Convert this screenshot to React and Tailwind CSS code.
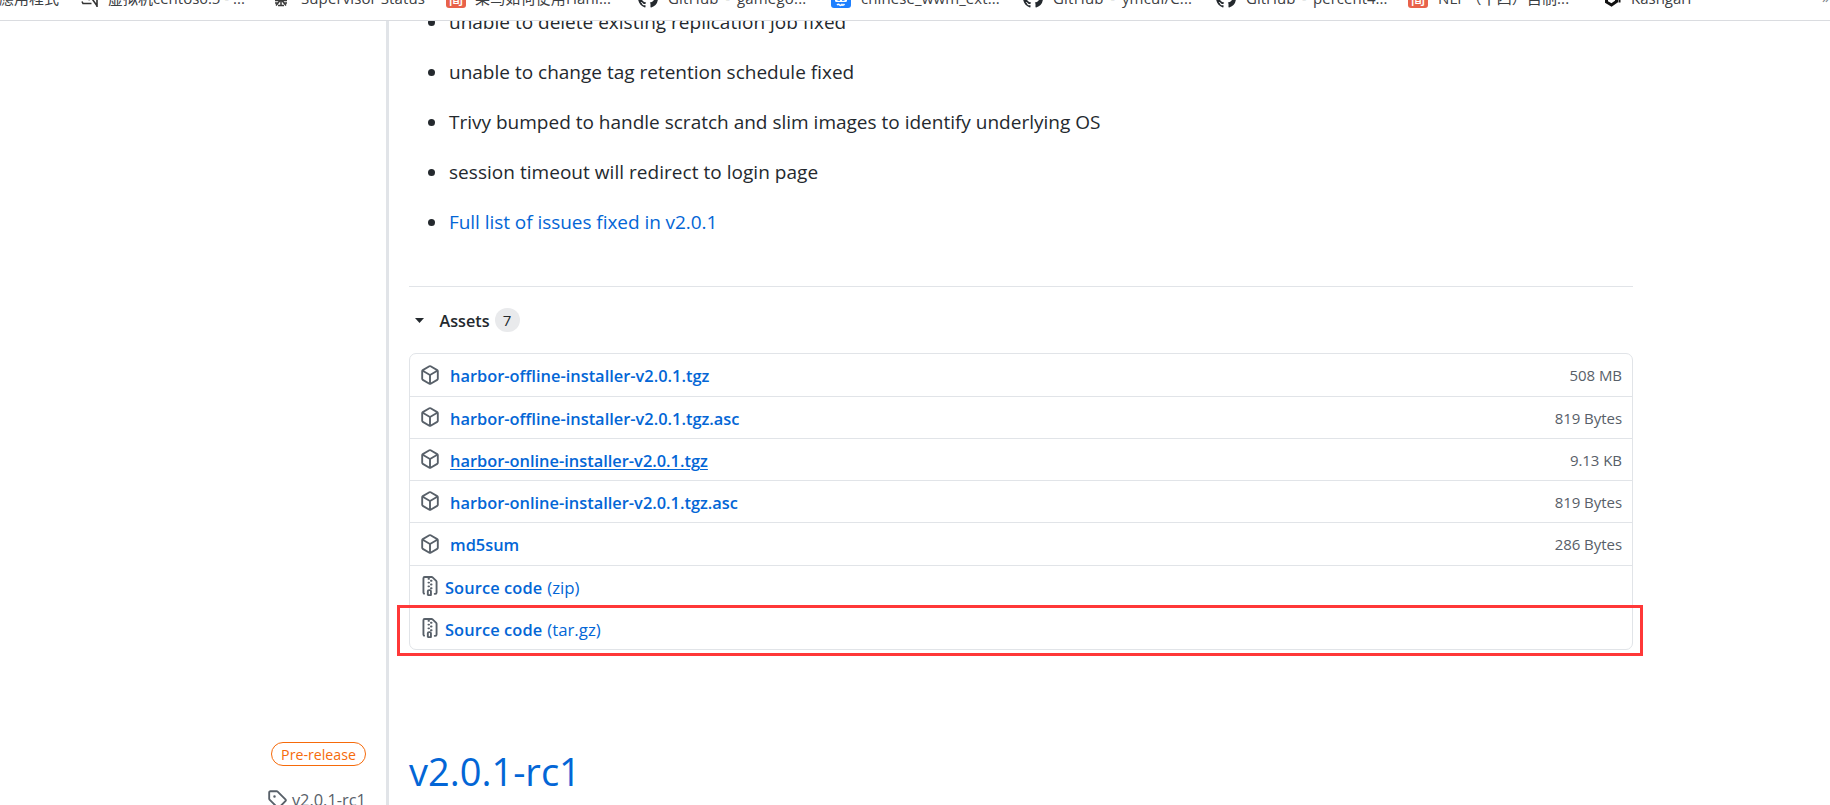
const bookmarks = [
  { icon: "vm", label: "虚拟机centos6.5 - ...", width: "w-[192px]" },
  { icon: "ant", label: "Supervisor Status", width: "w-[175px]", fit: "ml-[1px] tracking-[0.1px]" },
  { icon: "jian", label: "菜鸟如何使用Hanl...", width: "w-[192px]", fit: "tracking-[0.15px]" },
  { icon: "github", label: "GitHub - gamego...", width: "w-[193px]", fit: "ml-[1px] tracking-[0.2px] [word-spacing:2.5px]" },
  { icon: "juejin", label: "chinese_wwm_ext...", width: "w-[192px]", fit: "ml-[1px] tracking-[0.1px]" },
  { icon: "github", label: "GitHub - ymcui/C...", width: "w-[193px]", fit: "ml-[1px] tracking-[0.2px] [word-spacing:2.5px]" },
  { icon: "github", label: "GitHub - percent4...", width: "w-[192px]", fit: "ml-[1px] [word-spacing:2.5px]" },
  { icon: "jian", label: "NLP（十四）自制...", width: "w-[193px]", fit: "ml-[1px] tracking-[0.1px]" },
  { icon: "cube", label: "Kashgari", width: "w-[120px]", fit: "ml-[1px]" },
];

const fixes = [
  { text: "unable to delete existing replication job fixed" },
  { text: "unable to change tag retention schedule fixed" },
  { text: "Trivy bumped to handle scratch and slim images to identify underlying OS" },
  { text: "session timeout will redirect to login page", fit: "tracking-[0.035px]" },
  { text: "Full list of issues fixed in v2.0.1", fit: "tracking-[-0.05px] text-[#0366d6]" },
];

const assets = [
  { name: "harbor-offline-installer-v2.0.1.tgz", size: "508 MB", height: "h-[43px]", nudge: "mt-[1px]" },
  { name: "harbor-offline-installer-v2.0.1.tgz.asc", size: "819 Bytes", height: "h-[42px]", nudge: "mt-[3px]" },
  { name: "harbor-online-installer-v2.0.1.tgz", size: "9.13 KB", height: "h-[42px]", nudge: "mt-[3px]", hovered: true },
  { name: "harbor-online-installer-v2.0.1.tgz.asc", size: "819 Bytes", height: "h-[42px]", nudge: "mt-[3px]" },
  { name: "md5sum", size: "286 Bytes", height: "h-[43px]", nudge: "mt-[1px]" },
  { name: "Source code", kind: "(zip)", height: "h-[42px]", nudge: "mt-[3px]" },
  { name: "Source code", kind: "(tar.gz)", height: "h-[41px]", nudge: "mt-[3px]" },
];

function BookmarkIcon({ name }) {
  if (name === "jian") {
    return (
      <span className="flex size-5 shrink-0 items-center justify-center rounded-[3px] bg-[#e8624a] font-['Noto_Sans_CJK_SC',sans-serif] text-[15px] leading-5 font-medium text-white">
        简
      </span>
    );
  }
  if (name === "github") {
    return (
      <svg className="size-5 shrink-0 fill-[#24292e]" viewBox="0 0 16 16">
        <path d="M8 0C3.58 0 0 3.58 0 8c0 3.54 2.29 6.53 5.47 7.59.4.07.55-.17.55-.38 0-.19-.01-.82-.01-1.49-2.01.37-2.53-.49-2.69-.94-.09-.23-.48-.94-.82-1.13-.28-.15-.68-.52-.01-.53.63-.01 1.08.58 1.23.82.72 1.21 1.87.87 2.33.66.07-.52.28-.87.51-1.07-1.78-.2-3.64-.89-3.64-3.95 0-.87.31-1.59.82-2.15-.08-.2-.36-1.02.08-2.12 0 0 .67-.21 2.2.82.64-.18 1.32-.27 2-.27s1.36.09 2 .27c1.53-1.04 2.2-.82 2.2-.82.44 1.1.16 1.92.08 2.12.51.56.82 1.27.82 2.15 0 3.07-1.87 3.75-3.65 3.95.29.25.54.73.54 1.48 0 1.07-.01 1.93-.01 2.2 0 .21.15.46.55.38A8.01 8.01 0 0 0 16 8c0-4.42-3.58-8-8-8z" />
      </svg>
    );
  }
  if (name === "juejin") {
    return (
      <svg className="size-5 shrink-0" viewBox="0 0 20 20">
        <rect width="20" height="20" rx="3" fill="#1e80ff" />
        <path d="M4 6h12v6.5q0 1.500-1.500 1.500h-9Q4 14 4 12.500z" fill="#fff" />
        <path d="M6.500 12h2.500M11 12h2.500" stroke="#1e80ff" strokeWidth="1.300" />
        <path d="M6 17q1.500-1.500 2.500 0 1.500 1 2.500-.5 1 1.500 2.500-.5" stroke="#fff" strokeWidth="1.500" fill="none" />
      </svg>
    );
  }
  if (name === "vm") {
    return (
      <svg className="size-5 shrink-0" viewBox="0 0 20 20" fill="none" stroke="#333" strokeWidth="1.6">
        <path d="M3 13.5l1 2h8.5M9.5 12l3-2 6 8.5M18 8v11" />
      </svg>
    );
  }
  if (name === "ant") {
    return (
      <svg className="size-5 shrink-0" viewBox="0 0 20 20" fill="none" stroke="#3a3a3a" strokeWidth="1.5">
        <path d="M4 12.5h12M10 8v10M5 17.5l4-5M15 17.5l-4-5M4 15h3M13 15h3M7 17.5h6" />
      </svg>
    );
  }
  return (
    <svg className="size-5 shrink-0" viewBox="0 0 20 20" fill="none" stroke="#111" strokeWidth="3">
      <path d="M5.5 8v6l5 3 5-3.5V8" />
      <path d="M18.5 11v3.5" strokeWidth="2" />
    </svg>
  );
}

function BookmarkBar() {
  return (
    <header className="h-[21px] shrink-0 overflow-hidden border-b border-[#dadce0] text-[15px] leading-5 whitespace-nowrap text-[#3c4043]">
      <div className="-mt-3 flex h-5">
        <div className="flex w-[79px] shrink-0 justify-start">
          <span className="-ml-[1px] font-['Noto_Sans_CJK_TC',sans-serif]">應用程式</span>
        </div>
        {bookmarks.map((b, i) => (
          <div key={i} className={`flex shrink-0 gap-[9px] ${b.width}`}>
            <BookmarkIcon name={b.icon} />
            <span className={b.fit}>{b.label}</span>
          </div>
        ))}
        <span className="-mt-[1px] ml-auto w-[8px] text-[#80868b]">»</span>
      </div>
    </header>
  );
}

function PackageIcon() {
  return (
    <svg className="-mt-[1px] mr-[10px] size-5 shrink-0 fill-[#586069]" viewBox="0 0 16 16">
      <path fillRule="evenodd" d="M8.878.392a1.75 1.75 0 00-1.756 0l-5.25 3.045A1.75 1.75 0 001 4.951v6.098c0 .624.332 1.2.872 1.514l5.25 3.045a1.75 1.75 0 001.756 0l5.25-3.045c.54-.313.872-.89.872-1.514V4.951c0-.624-.332-1.2-.872-1.514L8.878.392zM7.875 1.69a.25.25 0 01.25 0l4.63 2.685L8 7.133 3.245 4.375l4.63-2.685zM2.5 5.677v5.372c0 .09.047.171.125.216l4.625 2.683V8.432L2.5 5.677zm6.25 8.271l4.625-2.683a.25.25 0 00.125-.216V5.677L8.75 8.432v5.516z" />
    </svg>
  );
}

function ZipIcon() {
  return (
    <svg className="-mt-[1px] mr-[5px] size-5 shrink-0 fill-[#586069]" viewBox="0 0 16 16">
      <path fillRule="evenodd" d="M3.5 1.75a.25.25 0 01.25-.25h3a.75.75 0 000 1.5h.5a.75.75 0 000-1.5h2.086a.25.25 0 01.177.073l2.914 2.914a.25.25 0 01.073.177v8.586a.25.25 0 01-.25.25h-.5a.75.75 0 000 1.5h.5A1.75 1.75 0 0014 13.25V4.664c0-.464-.184-.909-.513-1.237L10.573.513A1.75 1.75 0 009.336 0H3.75A1.75 1.75 0 002 1.75v11.5c0 .649.353 1.214.874 1.515a.75.75 0 10.752-1.298.25.25 0 01-.126-.217V1.75zM8.75 3a.75.75 0 000 1.5h.5a.75.75 0 000-1.5h-.5zM6 5.25a.75.75 0 01.75-.75h.5a.75.75 0 010 1.5h-.5A.75.75 0 016 5.25zm2 1.5A.75.75 0 018.75 6h.5a.75.75 0 010 1.5h-.5A.75.75 0 018 6.75zm-1.25.75a.75.75 0 000 1.5h.5a.75.75 0 000-1.5h-.5zM8 9.75A.75.75 0 018.75 9h.5a.75.75 0 010 1.5h-.5A.75.75 0 018 9.75zm-.75.75a1.75 1.75 0 00-1.75 1.75v3c0 .414.336.75.75.75h2.5a.75.75 0 00.75-.75v-3a1.75 1.75 0 00-1.75-1.75h-.5zM7 12.25a.25.25 0 01.25-.25h.5a.25.25 0 01.25.25v2.25H7v-2.25z" />
    </svg>
  );
}

function TagIcon() {
  return (
    <svg className="size-5 shrink-0 fill-[#586069]" viewBox="0 0 16 16">
      <path fillRule="evenodd" d="M2.5 7.775V2.75a.25.25 0 01.25-.25h5.025a.25.25 0 01.177.073l6.25 6.25a.25.25 0 010 .354l-5.025 5.025a.25.25 0 01-.354 0l-6.25-6.25a.25.25 0 01-.073-.177zm-1.5 0V2.75C1 1.784 1.784 1 2.75 1h5.025c.464 0 .91.184 1.238.513l6.25 6.25a1.75 1.75 0 010 2.474l-5.026 5.026a1.75 1.75 0 01-2.474 0l-6.25-6.25A1.75 1.75 0 011 7.775zM6 5a1 1 0 100 2 1 1 0 000-2z" />
    </svg>
  );
}

function AssetRow({ asset }) {
  return (
    <li className={`flex items-center border-[#e1e4e8] pr-[10px] pl-[10px] not-last:border-b ${asset.height}`}>
      {asset.kind ? <ZipIcon /> : <PackageIcon />}
      <a
        className={`text-[16.4px] leading-6 text-[#0366d6] ${asset.nudge} ${
          asset.hovered ? "underline decoration-1 underline-offset-[2px]" : ""
        }`}
      >
        <span className={`font-semibold ${asset.kind ? "tracking-[0.1px]" : ""}`}>{asset.name}</span>
        {asset.kind && <span className="ml-[5px] text-[16.8px]">{asset.kind}</span>}
      </a>
      {asset.size && (
        <span className="ml-auto text-[15px] leading-6 tracking-[-0.05px] text-[#586069]">{asset.size}</span>
      )}
    </li>
  );
}

export default function App() {
  return (
    <div className="flex h-[805px] w-[1830px] flex-col overflow-hidden bg-white font-['Open_Sans','Noto_Sans_CJK_SC',sans-serif] text-[#24292e]">
      <BookmarkBar />
      <div className="flex min-h-0 flex-1 overflow-hidden">
        <aside className="flex w-[386px] shrink-0 flex-col items-end pt-[721px] pr-5">
          <span className="flex h-6 w-[95px] shrink-0 items-center justify-center rounded-full border border-[#f66a0a] pt-[2px] text-[14.2px] leading-none text-[#f66a0a]">
            Pre-release
          </span>
          <div className="mt-[21px] flex h-6 shrink-0 items-center gap-[5px] text-[16.4px] leading-6 text-[#586069]">
            <TagIcon />
            <span className="mt-[2px]">v2.0.1-rc1</span>
          </div>
        </aside>

        <main className="w-[1247px] shrink-0 border-l-[3px] border-[#e1e4e8] pl-5">
          <ul className="-mt-[14px] flex flex-col gap-5">
            {fixes.map((f) => (
              <li key={f.text} className="flex h-[30px] items-center pl-[19px] text-[19px] leading-[30px]">
                <span className="mt-[1px] mr-[14px] size-[7px] rounded-full bg-[#24292e]" />
                <span className={f.fit}>{f.text}</span>
              </li>
            ))}
          </ul>

          <section className="mt-[49px] border-t border-[#e1e4e8]">
            <div className="flex h-[66px] items-center pl-[5.5px]">
              <svg className="mt-[1px] h-[5px] w-[9px] fill-[#24292e]" viewBox="0 0 9 5">
                <path d="M0 0h9L4.5 5z" />
              </svg>
              <span className="mt-[2px] ml-4 text-[16.2px] leading-6 font-semibold">Assets</span>
              <span className="ml-[5px] flex h-6 w-[25px] items-center justify-center rounded-full bg-[#e9eaec] text-[15px] leading-6">
                7
              </span>
            </div>
            <div className="relative">
              <ul className="rounded-[7px] border border-[#e1e4e8]">
                {assets.map((a, i) => (
                  <AssetRow key={i} asset={a} />
                ))}
              </ul>
              <div className="absolute -right-[10px] -bottom-[6px] -left-3 h-[51px] border-[3px] border-[#ff3838]" />
            </div>
          </section>

          <h1 className="mt-[99px] text-[38px] leading-[45px] text-[#0366d6]">v2.0.1-rc1</h1>
        </main>
      </div>
    </div>
  );
}
